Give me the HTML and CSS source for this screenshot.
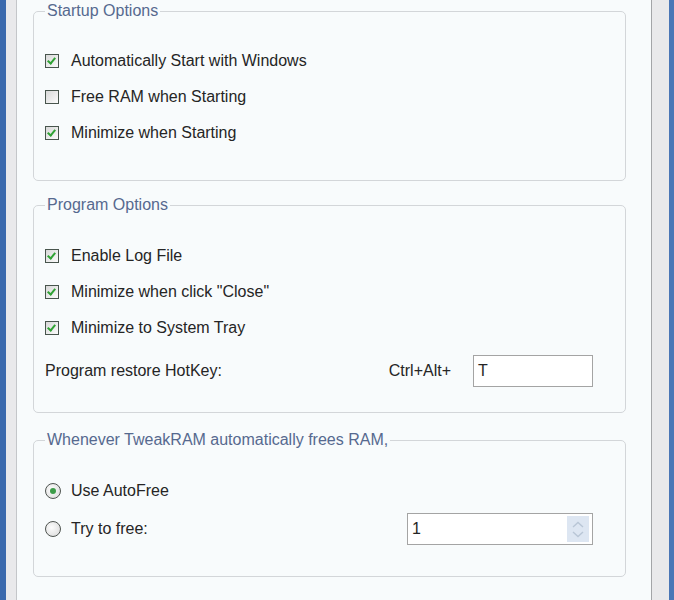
FILE: index.html
```html
<!DOCTYPE html>
<html lang="en">

<head>
  <meta charset="UTF-8" />
  <title>TweakRAM Options</title>
  <link rel="stylesheet" href="styles.css">
</head>

<body>
  <div class="window">
    <div class="frame">
      <div class="panel">

        <!-- Startup -->
        <fieldset class="group group-startup">
          <legend>Startup Options</legend>
          <label class="row"><span class="check on"></span>Automatically Start with Windows</label>
          <label class="row"><span class="check"></span>Free RAM when Starting</label>
          <label class="row"><span class="check on"></span>Minimize when Starting</label>
        </fieldset>

        <!-- Program -->
        <fieldset class="group group-program">
          <legend>Program Options</legend>
          <label class="row"><span class="check on"></span>Enable Log File</label>
          <label class="row"><span class="check on"></span>Minimize when click "Close"</label>
          <label class="row"><span class="check on"></span>Minimize to System Tray</label>
          <div class="row hotkey">
            <span>Program restore HotKey:</span>
            <span class="hotkey-prefix">Ctrl+Alt+</span>
            <div class="field hotkey-field">T</div>
          </div>
        </fieldset>

        <!-- AutoFree -->
        <fieldset class="group group-free">
          <legend>Whenever TweakRAM automatically frees RAM,</legend>
          <label class="row"><span class="radio on"></span>Use AutoFree</label>
          <div class="row tryfree">
            <label class="radio-label"><span class="radio"></span>Try to free:</label>
            <div class="field spin-field">
              <span>1</span>
              <span class="spin">
                <svg width="12" height="7" viewBox="0 0 12 7"><path d="M1 6 L6 1.5 L11 6" fill="none" stroke="#b9c6d6" stroke-width="1.4"/></svg>
                <svg width="12" height="7" viewBox="0 0 12 7"><path d="M1 1 L6 5.5 L11 1" fill="none" stroke="#b9c6d6" stroke-width="1.4"/></svg>
              </span>
            </div>
          </div>
        </fieldset>

      </div>
    </div>
  </div>
</body>

</html>
```

FILE: styles.css
```css
html,
body {
  margin: 0;
  padding: 0;
  height: 100%;
}

body {
  font-family: "Liberation Sans", Arial, sans-serif;
  font-size: 16px;
  color: #252525;
  overflow: hidden;
}

.window {
  display: flex;
  height: 100%;
  border-left: 6px solid #3b69ad;
  border-right: 5px solid #4a76b6;
  background: #e9e9eb;
  box-sizing: border-box;
}

.frame {
  flex: 1;
  display: flex;
  padding: 0 17px 0 10px;
}

.panel {
  flex: 1;
  background: #f8fbfc;
  border-left: 1px solid #c4c6c9;
  border-right: 1px solid #a3a5a8;
  padding: 3px 25px 0 16px;
}

.group {
  margin: 0;
  border: 1px solid #d3d6d9;
  border-radius: 5px;
  padding: 24px 32px 29px 11px;
  min-width: 0;
}

.group legend {
  color: #56698f;
  padding: 0 2px;
  line-height: 16px;
}

.group-program {
  margin-top: 16px;
  padding-top: 25px;
  padding-bottom: 25px;
}

.group-free {
  margin-top: 19px;
  padding-top: 25px;
  padding-bottom: 31px;
}

.row {
  display: flex;
  align-items: center;
  height: 36px;
}

.check {
  width: 12px;
  height: 12px;
  border: 1px solid #48554d;
  background: linear-gradient(135deg, #d8d8d8, #fbfbfb);
  margin-right: 12px;
  position: relative;
  flex-shrink: 0;
}

.check.on::after {
  content: "";
  position: absolute;
  left: 3px;
  top: 1px;
  width: 3px;
  height: 6px;
  border: solid #2fa234;
  border-width: 0 2px 2px 0;
  transform: rotate(40deg);
}

.radio {
  width: 14px;
  height: 14px;
  border: 1px solid #4f5450;
  border-radius: 50%;
  background: radial-gradient(circle at 40% 40%, #fdfdfd, #d8d8d8);
  margin-right: 10px;
  position: relative;
  flex-shrink: 0;
}

.radio.on::after {
  content: "";
  position: absolute;
  left: 4px;
  top: 4px;
  width: 6px;
  height: 6px;
  border-radius: 50%;
  background: #3c9c48;
}

.radio-label {
  display: flex;
  align-items: center;
}

.field {
  box-sizing: border-box;
  height: 32px;
  border: 1px solid #a4a4a4;
  background: #fff;
  display: flex;
  align-items: center;
  padding-left: 4px;
}

.hotkey {
  height: 32px;
  margin-top: 9px;
}

.hotkey-prefix {
  margin-left: auto;
  margin-right: 22px;
}

.hotkey-field {
  width: 120px;
}

.tryfree {
  height: 32px;
  margin-top: 4px;
}

.spin-field {
  width: 186px;
  margin-left: auto;
  justify-content: space-between;
  padding-right: 3px;
}

.spin {
  width: 22px;
  height: 26px;
  background: #dde6f2;
  display: flex;
  flex-direction: column;
  align-items: center;
  justify-content: center;
  gap: 3px;
}

.spin svg {
  display: block;
}
```
